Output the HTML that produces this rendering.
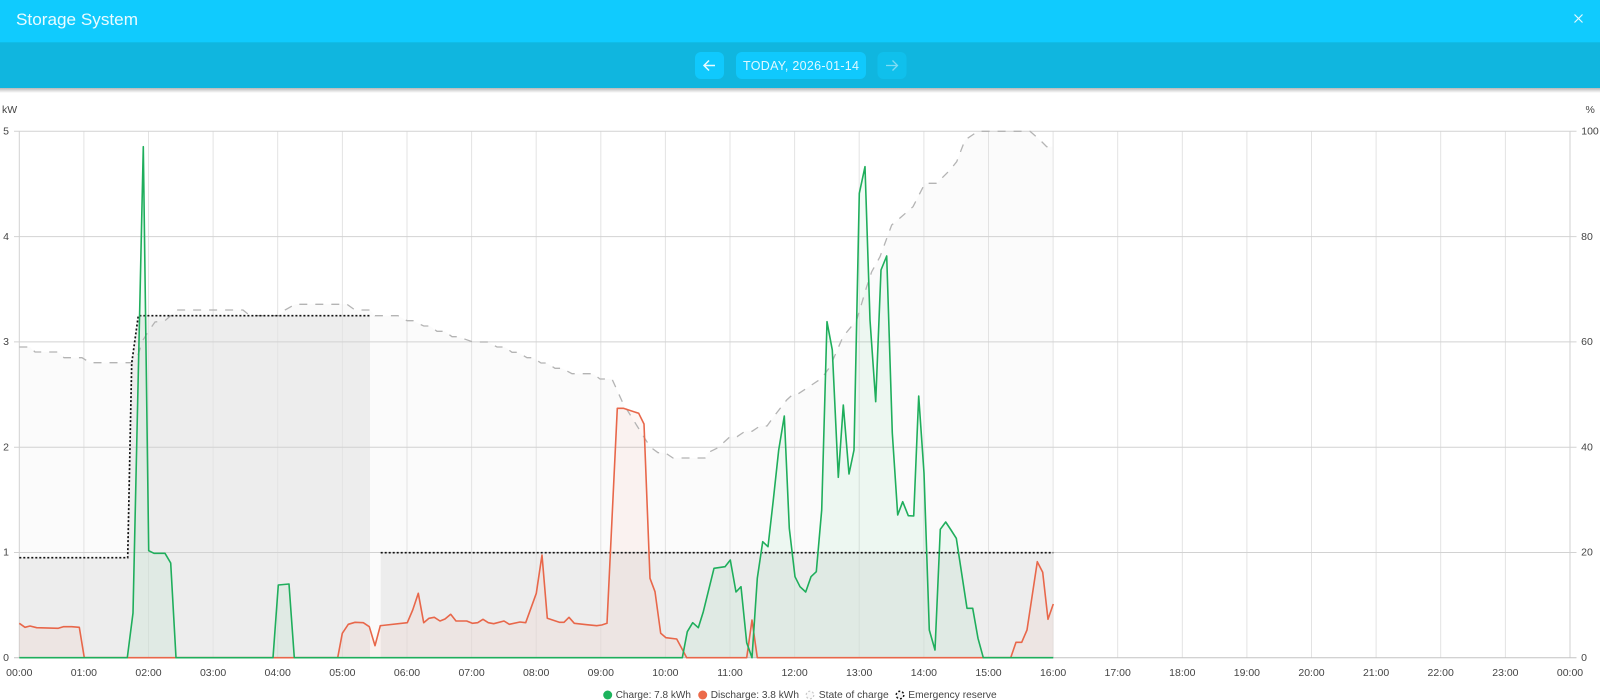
<!DOCTYPE html>
<html><head><meta charset="utf-8"><title>Storage System</title>
<style>
html,body{margin:0;padding:0;background:#fff;width:1600px;height:700px;overflow:hidden}
svg{display:block;font-family:"Liberation Sans",sans-serif}
</style></head>
<body>
<svg width="1600" height="700" viewBox="0 0 1600 700" xmlns="http://www.w3.org/2000/svg">
<defs>
<linearGradient id="sh" x1="0" y1="0" x2="0" y2="1"><stop offset="0" stop-color="#000" stop-opacity=".28"/><stop offset="1" stop-color="#000" stop-opacity="0"/></linearGradient>
</defs>
<rect width="1600" height="700" fill="#fff"/>
<!-- header -->
<rect x="0" y="88" width="1600" height="5" fill="url(#sh)"/>
<rect x="0" y="0" width="1600" height="42" fill="#10cbfe"/>
<rect x="0" y="42" width="1600" height="46" fill="#10b6df"/>
<rect x="0" y="42" width="1600" height="1" fill="#0fbde8"/>
<text x="16" y="25" font-size="17" fill="#e9fbff" textLength="122" lengthAdjust="spacingAndGlyphs">Storage System</text>
<path d="M1574.5 14.5l8 8M1582.5 14.5l-8 8" stroke="#e4f9ff" stroke-width="1.2" fill="none"/>
<rect x="695" y="52" width="29" height="27" rx="6" fill="#10c9fd"/>
<path d="M715 65.5h-10.500M709 60.500l-5 5 5 5" stroke="#e8fbff" stroke-width="1.500" fill="none"/>
<rect x="736" y="52" width="130" height="27" rx="6" fill="#10c9fd"/>
<text x="743" y="70" font-size="12.500" fill="#dff8ff" textLength="116" lengthAdjust="spacing">TODAY, 2026-01-14</text>
<rect x="877.500" y="52" width="29" height="27" rx="6" fill="#10c0ec"/>
<path d="M886 65.500h11M892.500 60.500l5 5-5 5" stroke="#7fdcf3" stroke-width="1.300" fill="none"/>
<!-- soc fill -->
<path fill="#000" fill-opacity=".014" d="M19.300 657.700V347H30L35 352H58L64 357.700H82L90 362.700H131L137 358L143 340L148.700 331L155 322L165 320.700L177 310H243L250 315.700H279L285 310L295 304.300H347L355 310H370L375 315.700H398L407 320.700H413L423.700 326H430L437 331.300H445L452 336.700H458L473 342H488L497 347H505L512 352.300H518L527 357.700H533L541 363H547L555 368.300H562L572 373.700H593L600 379H612L623 403.300L650 446.700L658 452.700H665L673 458H705L708 452.700L718 447.700L730 436.700H737L745 431.300H752L760 426H767L775 415L786.700 400L793.300 394H798L821.700 378.300L830 366.700L843 336.700L856.700 320L866.700 286.700L871.700 271.700L880 256.700L891.700 225L900 218L913 206.700L925 183.300H936.700L950 170L956.700 161.700L965 140L978 131.300H1030L1040 140L1046.700 146.700H1053.300V657.700Z"/>
<!-- reserve fill -->
<path fill="#000" fill-opacity=".055" d="M19.300 657.700V557.700H127.700L131.700 363.300L138.300 315.700H370V657.700Z"/>
<rect x="380.700" y="552.700" width="672.600" height="105" fill="#000" fill-opacity=".055"/>
<!-- grid -->
<path fill="none" stroke="#e3e3e3" stroke-width="1" d="M83.900 131V658M148.500 131V658M213.100 131V658M277.700 131V658M342.400 131V658M407 131V658M471.600 131V658M536.200 131V658M600.800 131V658M665.400 131V658M730 131V658M794.600 131V658M859.200 131V658M923.900 131V658M988.500 131V658M1053.100 131V658M1117.700 131V658M1182.300 131V658M1246.900 131V658M1311.500 131V658M1376.100 131V658M1440.700 131V658M1505.400 131V658"/>
<path fill="none" stroke="#d2d2d2" stroke-width="1" d="M19.300 131V658M1570 131V658M14 131.300H1576.500M14 236.600H1576.500M14 341.900H1576.500M14 447.200H1576.500M14 552.500H1576.500"/>
<path fill="none" stroke="#c4c4c4" stroke-width="1" d="M14 657.700H1576.500"/>
<!-- discharge fill -->
<path fill="#e8603c" fill-opacity=".055" d="M19.300 657.700V623.300L25 627.300L30 626L36.700 627.700L58.300 628.300L63.300 626.700L71.700 626.700L79.300 627.300L84.300 657.700ZM337.700 657.700L342.300 633.300L348.300 624.300L355 622.300L363.300 622.700L369.300 626.700L375 645.700L380.300 625.700L407.300 622.700L412.700 610L418.300 593.300L423.700 622.700L429 618.300L434.300 617.300L440 621L445 619L450.700 614.300L456 621L466.700 621L472.300 623.300L477.700 622.700L483 619.300L488.300 622.700L493.700 623.700L504 621L509.300 624.300L520 622L525.700 622.700L536.300 593.300L542 555L547.300 618.300L559.300 622.300L564 622.300L569 617.300L574.300 623.300L586.700 624.700L596.700 625.700L601.700 625L607 623.300L617.300 408.300L623.300 408.300L638.700 413.300L644 424L650 578.300L655 591.700L660.700 633.300L666 637.700L676.700 639L681.700 648.300L686.700 657.700ZM746.700 657.700L752 620L757.300 657.700ZM1010.700 657.700L1016 642.300L1021.700 642.300L1027 630L1037.300 561.700L1042.700 572.300L1048 619.300L1053.300 604V657.700Z"/>
<!-- charge fill -->
<path fill="#14b45a" fill-opacity=".06" d="M127.300 657.700L133 613L143.300 146.700L148.700 550.700L154 553.300L165 553.300L170.700 563L176 657.700ZM273 657.700L278.300 585L289 584L294.300 657.700ZM682.300 657.700L687.300 631.700L692.700 622.700L698.300 627.700L703.300 611.700L714 568.300L725 566.700L730.300 560L736 592L741 586.700L746.700 642.700L752 657.700L757.300 578.300L762.700 541.700L768 546.700L773.300 500L778.700 450L784.300 416L789.300 528.300L795 576.700L800 586.700L805.700 592L811 576.700L816.300 571.700L821.700 510L827 321.700L832.300 350L838.300 477.300L843.300 405L849 474L854 450L859.300 193.300L865 166.700L870 320L875.700 401.700L881 270L886.700 256L892.300 433L897.700 515L902.700 501.700L908.300 515.700L913.700 516L918.700 396L924 473L929.300 630L935 650L940.300 529.300L945.700 522L951 530L956.300 538.300L967 608.300L972.700 608.300L978 638.300L983.300 657.700Z"/>
<!-- soc line -->
<path fill="none" stroke="#b4b4b4" stroke-width="1.300" stroke-dasharray="8 8" d="M19.300 347H30L35 352H58L64 357.700H82L90 362.700H131L137 358L143 340L148.700 331L155 322L165 320.700L177 310H243L250 315.700H279L285 310L295 304.300H347L355 310H370L375 315.700H398L407 320.700H413L423.700 326H430L437 331.300H445L452 336.700H458L473 342H488L497 347H505L512 352.300H518L527 357.700H533L541 363H547L555 368.300H562L572 373.700H593L600 379H612L623 403.300L650 446.700L658 452.700H665L673 458H705L708 452.700L718 447.700L730 436.700H737L745 431.300H752L760 426H767L775 415L786.700 400L793.300 394H798L821.700 378.300L830 366.700L843 336.700L856.700 320L866.700 286.700L871.700 271.700L880 256.700L891.700 225L900 218L913 206.700L925 183.300H936.700L950 170L956.700 161.700L965 140L978 131.300H1030L1040 140L1046.700 146.700H1053.300"/>
<!-- reserve line -->
<path fill="none" stroke="#111" stroke-width="1.700" stroke-dasharray="2 2" d="M19.300 557.700H127.700L131.700 363.300L138.300 315.700H370M380.700 552.700H1053.300"/>
<!-- discharge line -->
<path fill="none" stroke="#e8674a" stroke-width="1.600" stroke-linejoin="round" d="M19.300 623.300L25 627.300L30 626L36.700 627.700L58.300 628.300L63.300 626.700L71.700 626.700L79.300 627.300L84.300 657.700H337.700L342.300 633.300L348.300 624.300L355 622.300L363.300 622.700L369.300 626.700L375 645.700L380.300 625.700L407.300 622.700L412.700 610L418.300 593.300L423.700 622.700L429 618.300L434.300 617.300L440 621L445 619L450.700 614.300L456 621L466.700 621L472.300 623.300L477.700 622.700L483 619.300L488.300 622.700L493.700 623.700L504 621L509.300 624.300L520 622L525.700 622.700L536.300 593.300L542 555L547.300 618.300L559.300 622.300L564 622.300L569 617.300L574.300 623.300L586.700 624.700L596.700 625.700L601.700 625L607 623.300L617.300 408.300L623.300 408.300L638.700 413.300L644 424L650 578.300L655 591.700L660.700 633.300L666 637.700L676.700 639L681.700 648.300L686.700 657.700H746.700L752 620L757.300 657.700H1010.700L1016 642.300L1021.700 642.300L1027 630L1037.300 561.700L1042.700 572.300L1048 619.300L1053.300 604"/>
<!-- charge line -->
<path fill="none" stroke="#1fae5c" stroke-width="1.600" stroke-linejoin="round" d="M19.300 657.700H127.300L133 613L143.300 146.700L148.700 550.700L154 553.300L165 553.300L170.700 563L176 657.700H273L278.300 585L289 584L294.300 657.700H337.700M380 657.700H682.300L687.300 631.700L692.700 622.700L698.300 627.700L703.300 611.700L714 568.300L725 566.700L730.300 560L736 592L741 586.700L746.700 642.700L752 657.700L757.300 578.300L762.700 541.700L768 546.700L773.300 500L778.700 450L784.300 416L789.300 528.300L795 576.700L800 586.700L805.700 592L811 576.700L816.300 571.700L821.700 510L827 321.700L832.300 350L838.300 477.300L843.300 405L849 474L854 450L859.300 193.300L865 166.700L870 320L875.700 401.700L881 270L886.700 256L892.300 433L897.700 515L902.700 501.700L908.300 515.700L913.700 516L918.700 396L924 473L929.300 630L935 650L940.300 529.300L945.700 522L951 530L956.300 538.300L967 608.300L972.700 608.300L978 638.300L983.300 657.700H1053.300M337.700 657.700H380"/>
<!-- axis labels -->
<g font-size="10.500" fill="#444">
<text x="2" y="113">kW</text>
<text x="1585.500" y="113">%</text>
<g text-anchor="middle">
<text x="6" y="134.500">5</text><text x="6" y="239.800">4</text><text x="6" y="345">3</text><text x="6" y="450.300">2</text><text x="6" y="555.500">1</text><text x="6" y="661">0</text>
<text x="1590" y="134.500">100</text><text x="1587" y="239.800">80</text><text x="1587" y="345">60</text><text x="1587" y="450.300">40</text><text x="1587" y="555.500">20</text><text x="1584" y="661">0</text>
<text x="19.300" y="676">00:00</text><text x="83.900" y="676">01:00</text><text x="148.500" y="676">02:00</text><text x="213.100" y="676">03:00</text><text x="277.700" y="676">04:00</text><text x="342.400" y="676">05:00</text><text x="407" y="676">06:00</text><text x="471.600" y="676">07:00</text><text x="536.200" y="676">08:00</text><text x="600.800" y="676">09:00</text><text x="665.400" y="676">10:00</text><text x="730" y="676">11:00</text><text x="794.600" y="676">12:00</text><text x="859.200" y="676">13:00</text><text x="923.900" y="676">14:00</text><text x="988.500" y="676">15:00</text><text x="1053.100" y="676">16:00</text><text x="1117.700" y="676">17:00</text><text x="1182.300" y="676">18:00</text><text x="1246.900" y="676">19:00</text><text x="1311.500" y="676">20:00</text><text x="1376.100" y="676">21:00</text><text x="1440.700" y="676">22:00</text><text x="1505.400" y="676">23:00</text><text x="1570" y="676">00:00</text>
</g>
</g>
<!-- legend -->
<circle cx="607.700" cy="695" r="4.500" fill="#1cb35c"/>
<circle cx="702.700" cy="695" r="4.500" fill="#ec6a4a"/>
<circle cx="810" cy="695" r="3.800" fill="#fafafa" stroke="#c8c8c8" stroke-width="1.200" stroke-dasharray="2 2"/>
<circle cx="900" cy="695" r="3.800" fill="#f4f4f4" stroke="#111" stroke-width="1.500" stroke-dasharray="2 2"/>
<g font-size="10.500" fill="#444">
<text x="615.700" y="698" textLength="75.300" lengthAdjust="spacingAndGlyphs">Charge: 7.8 kWh</text>
<text x="710.700" y="698" textLength="88.300" lengthAdjust="spacingAndGlyphs">Discharge: 3.8 kWh</text>
<text x="818.700" y="698" textLength="70" lengthAdjust="spacingAndGlyphs">State of charge</text>
<text x="908.300" y="698" textLength="88.400" lengthAdjust="spacingAndGlyphs">Emergency reserve</text>
</g>
</svg>
</body></html>
